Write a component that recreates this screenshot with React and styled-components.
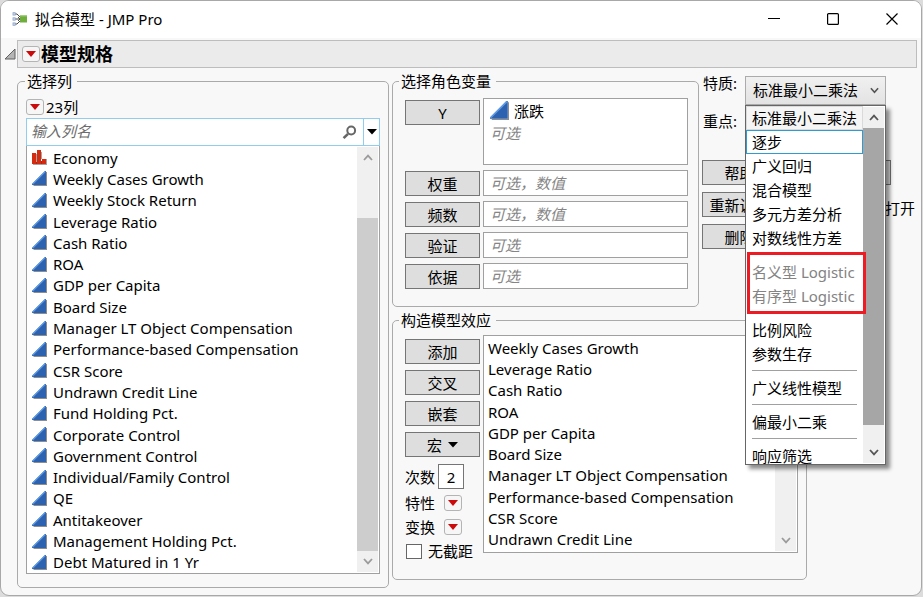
import React from "react";
import styled, { createGlobalStyle, css } from "styled-components";

const GlobalStyle = createGlobalStyle`
  *, *::before, *::after { box-sizing: border-box; }
  body { margin: 0; background: #dcdcdc; }
  body, button, input, select {
    font-family: "Noto Sans", "Noto Sans CJK SC", sans-serif;
    font-size: 15px;
    line-height: 20px;
    color: #000;
  }
`;

const Window = styled.main`
  display: flex;
  flex-direction: column;
  min-height: calc(100vh - 1px);
  margin: 0 1px 1px 0;
  background: #f8f8f8;
  border: 1px solid #a8a8a8;
  border-radius: 9px;
  overflow: hidden;
`;

const TitleBar = styled.header`
  display: flex;
  align-items: center;
  height: 37px;
  padding: 0 0 1px 11px;
  background: #fff;
`;

const Title = styled.h1`
  flex: 1;
  margin: 0 0 0 7px;
  font-size: 15px;
  font-weight: 400;
`;

const WindowButton = styled.button`
  display: grid;
  place-items: center;
  width: 59px;
  height: 36px;
  padding: 0;
  border: 0;
  background: none;
`;

const SectionRow = styled.div`
  display: flex;
  align-items: center;
  gap: 1px;
  padding: 2px 4px 3px 3px;
`;

const IconButton = styled.button`
  display: grid;
  place-items: center;
  padding: 0;
  border: 0;
  background: none;
  color: inherit;
`;

const SectionHeader = styled.div`
  display: flex;
  flex: 1;
  align-items: center;
  gap: 1px;
  height: 28px;
  padding-left: 4px;
  background: #ebebeb;
  border: 1px solid #bdbdbd;
`;

const SectionTitle = styled.h2`
  margin: 0;
  font-size: 18px;
  line-height: 24px;
  font-weight: 700;
`;

const RedButton = styled.button`
  display: grid;
  place-items: center;
  flex: none;
  width: 18px;
  height: 16px;
  padding: 0;
  background: #f6f6f6;
  border: 1px solid #b4b4b4;
  border-radius: 3px;
`;

const Columns = styled.div`
  display: grid;
  flex: 1;
  grid-template-columns: minmax(0, 372fr) minmax(0, 525fr);
  gap: 3px;
  padding: 0 4px 7px 16px;
`;

const Group = styled.fieldset`
  min-width: 0;
  margin: 0;
  padding: ${(p) => p.$padding};
  border: 1px solid #aaa;
  border-radius: 5px;
`;

const ColumnGroup = styled(Group)`
  display: flex;
  flex-direction: column;
`;

const Legend = styled.legend`
  margin: 0 0 0 ${(p) => p.$shift || 0}px;
  padding: 0 5px 0 2px;
`;

const CountRow = styled.div`
  display: flex;
  align-items: center;
  gap: 2px;
  height: 22px;
  padding-bottom: 1px;
`;

const SearchBox = styled.div`
  display: flex;
  height: 28px;
  background: #fff;
  border: 1px solid #93cdec;
`;

const SearchInput = styled.input`
  flex: 1;
  min-width: 0;
  padding: 0 4px 2px;
  border: 0;
  outline: 0;
  background: none;
  &::placeholder { color: #6c6c6c; font-style: italic; opacity: 1; }
`;

const SearchIcon = styled.span`
  display: grid;
  place-items: center;
  width: 28px;
`;

const SearchMenuButton = styled(IconButton)`
  width: 16px;
  border-left: 1px solid #93cdec;
`;

const ListFrame = styled.div`
  display: flex;
  background: #fff;
  border: 1px solid #a0a0a0;
  ${(p) => p.$fill && css`flex: 1; border-top: 0;`}
  ${(p) => p.$minHeight && css`min-height: ${p.$minHeight}px;`}
`;

const Rows = styled.ul`
  display: grid;
  flex: 1;
  grid-auto-rows: minmax(20px, 1fr);
  min-width: 0;
  margin: 0;
  padding: ${(p) => p.$padding};
  list-style: none;
`;

const Row = styled.li`
  display: flex;
  align-items: center;
  gap: 6px;
  white-space: nowrap;
`;

const Scrollbar = styled.div`
  display: grid;
  flex: none;
  grid-template-rows: 21px ${(p) => p.$track} 21px;
  width: 21px;
  margin: 1px 1px 1px 0;
  background: #f0f0f0;
  color: ${(p) => p.$arrow || "#9b9b9b"};
`;

const Thumb = styled.div`
  grid-row: 3;
  background: ${(p) => p.$color || "#cdcdcd"};
`;

const ScrollEnd = styled(IconButton)`
  grid-row: 5;
`;

const RightSide = styled.div`
  display: flex;
  flex-direction: column;
  gap: 3px;
  min-width: 0;
`;

const TopArea = styled.div`
  display: grid;
  grid-template-columns: minmax(0, 307fr) minmax(0, 214fr);
  gap: 4px;
`;

const RoleGrid = styled.div`
  display: grid;
  grid-template-columns: 75px minmax(0, 1fr);
  gap: 5px 3px;
  align-items: end;
`;

const PushButton = styled.button`
  display: flex;
  align-items: center;
  justify-content: center;
  gap: 6px;
  width: 75px;
  height: 25px;
  padding: 0;
  background: #dedede;
  border: 1px solid #757575;
  white-space: nowrap;
  ${(p) => p.$top && css`align-self: start; margin-top: 2px;`}
`;

const RoleBox = styled.div`
  height: 67px;
  padding: 1px 6px;
  background: #fff;
  border: 1px solid #a0a0a0;
`;

const RoleItem = styled.div`
  display: flex;
  align-items: center;
  gap: 5px;
  height: 21px;
`;

const Hint = styled.div`
  line-height: 24px;
  font-style: italic;
  color: #858585;
`;

const RoleInput = styled.input`
  width: 100%;
  height: 26px;
  padding: 0 6px;
  background: #fff;
  border: 1px solid #a0a0a0;
  outline: 0;
  &::placeholder {
    font-style: italic;
    color: #858585;
    opacity: 1;
  }
`;

const EffectsGroup = styled(Group)`
  width: 100%;
  max-width: 415px;
`;

const EffectsLayout = styled.div`
  display: grid;
  grid-template-columns: 75px minmax(0, 1fr);
  gap: 3px;
  align-items: start;
`;

const Controls = styled.div`
  display: flex;
  flex-direction: column;
  gap: 6px;
  padding-top: 4px;
`;

const OptionStack = styled.div`
  display: flex;
  flex-direction: column;
  gap: 4px;
  padding-top: 1px;
`;

const OptionRow = styled.div`
  display: flex;
  align-items: center;
  gap: ${(p) => p.$gap}px;
  white-space: nowrap;
`;

const DegreeInput = styled.input`
  width: 26px;
  height: 25px;
  padding: 0;
  text-align: center;
  background: #fff;
  border: 1px solid #757575;
`;

const Tick = styled.input`
  appearance: none;
  flex: none;
  width: 16px;
  height: 15px;
  margin: 0 0 0 1px;
  background: #fff;
  border: 1px solid #666;
`;

const Panel = styled.section`
  padding-top: 5px;
  min-width: 0;
`;

const FieldRow = styled.div`
  display: flex;
  align-items: flex-start;
  gap: 8px;
  height: 38px;
`;

const FieldLabel = styled.label`
  width: 34px;
  line-height: 14px;
  white-space: nowrap;
`;

const SelectWrap = styled.div`
  position: relative;
  width: 141px;
`;

const Select = styled.select`
  appearance: none;
  display: block;
  width: 100%;
  height: 29px;
  padding: 0 7px 1px;
  background: linear-gradient(#f0f0f0, #e3e3e3);
  border: 1px solid #ababab;
  border-radius: 0;
  outline: 0;
`;

const SelectArrow = styled.span`
  position: absolute;
  top: 11px;
  right: 7px;
  display: grid;
  color: #555;
  pointer-events: none;
`;

const Popup = styled.div`
  position: absolute;
  z-index: 2;
  top: 100%;
  left: 0;
  display: flex;
  width: 100%;
  height: 360px;
  background: #fff;
  border: 1px solid #666;
  box-shadow: 4px 4px 4px rgba(0, 0, 0, 0.45);
`;

const PopupList = styled.ul`
  flex: 1;
  min-width: 0;
  margin: 0;
  padding: 0;
  overflow: hidden;
  list-style: none;
`;

const PopupItem = styled.li`
  height: 24px;
  padding: 1px 5px;
  border: 1px solid transparent;
  white-space: nowrap;
  ${(p) => p.$state === "current" && css`background: #f5f5f5; border-color: #dadada;`}
  ${(p) => p.$state === "hover" && css`background: #fff; border-color: #2f9bd3;`}
  ${(p) => p.$state === "disabled" && css`color: #838383;`}
`;

const Divider = styled.li`
  height: 10px;
  padding: 4px 6px 0;
  &::before { content: ""; display: block; height: 1px; background: #a0a0a0; }
`;

const RedFrame = styled.div`
  position: absolute;
  top: 146px;
  left: 1px;
  width: 119px;
  height: 62px;
  border: 3px solid #ed1c24;
  pointer-events: none;
`;

const Actions = styled.div`
  display: grid;
  gap: 7px;
  margin-top: 8px;
`;

const ActionRow = styled.div`
  display: flex;
  align-items: center;
  gap: ${(p) => p.$gap || 0}px;
  height: 25px;
  margin-left: -1px;
`;

const KeepOpen = styled.label`
  display: flex;
  align-items: center;
  gap: 4px;
  padding-top: 6px;
  white-space: nowrap;
`;

const AppIcon = () => (
  <svg width="16" height="14" viewBox="0 0 16 14" aria-hidden="true">
    <path d="M3 2 H5 L8 5 M3 7 H8 M3 12 H5 L8 9" stroke="#4c4c4c" fill="none" />
    <path d="M6 5 L8 7 L6 9" stroke="#4c4c4c" fill="none" />
    <g fill="#cfdcf2" stroke="#8ea2c4" strokeWidth=".8">
      <rect x="1" y=".7" width="2.2" height="2.4" />
      <rect x="1" y="5.8" width="2.2" height="2.4" />
      <rect x="1" y="10.9" width="2.2" height="2.4" />
    </g>
    <rect x="8" y="3.5" width="7" height="7" fill="#6fae3c" />
    <path d="M8 4 H15" stroke="#93c868" />
  </svg>
);

const Disclosure = () => (
  <svg width="12" height="12" viewBox="0 0 12 12" aria-hidden="true">
    <path d="M11 1 V11 H1 Z" fill="#b5b5b5" stroke="#606060" strokeLinejoin="round" />
  </svg>
);

const RedTriangle = ({ label }) => (
  <RedButton type="button" aria-label={label}>
    <svg width="10" height="6" viewBox="0 0 10 6" aria-hidden="true">
      <path d="M0 0 H10 L5 6 Z" fill="#cc0a0a" />
    </svg>
  </RedButton>
);

const BlackTriangle = () => (
  <svg width="10" height="6" viewBox="0 0 10 6" aria-hidden="true">
    <path d="M0 0 H10 L5 5.4 Z" fill="#000" />
  </svg>
);

const Magnifier = () => (
  <svg width="15" height="15" viewBox="0 0 15 15" aria-hidden="true">
    <circle cx="9.2" cy="5.5" r="3.9" fill="none" stroke="#666" strokeWidth="2" />
    <path d="M6 8.8 L1.6 13.2" stroke="#666" strokeWidth="2.6" />
  </svg>
);

const Continuous = ({ size = 15 }) => (
  <svg width={size} height={size} viewBox="0 0 15 15" aria-hidden="true">
    <path d="M15 1 V15 H1 L2 14 H14 V1 Z" fill="#8e8e8e" />
    <path d="M14 0 V14 H0 V13 L13 0 Z" fill="#2c62b0" />
    <path d="M0.5 13.2 L13.3 0.5" stroke="#5e9be4" strokeWidth="1.2" />
  </svg>
);

const Nominal = () => (
  <svg width="15" height="15" viewBox="0 0 15 15" aria-hidden="true">
    <path d="M4 4 H5 V13 H4 Z M9 2 H10 V9 H9 Z M14 9 H15 V15 H1 V14 H14 Z" fill="#a4a4a4" />
    <path d="M0 3 H4 V14 H0 Z M5 0 H9 V14 H5 Z M10 9 H14 V14 H10 Z" fill="#d42a10" />
    <path d="M4 12 H5 V14 H4 Z M9 11 H10 V14 H9 Z" fill="#b52310" />
  </svg>
);

const Chevron = ({ up, size = 10 }) => (
  <svg
    width={size}
    height="7"
    viewBox="0 0 10 7"
    fill="none"
    stroke="currentColor"
    strokeWidth="1.8"
    aria-hidden="true"
  >
    <path d={up ? "M1 6 L5 1.6 L9 6" : "M1 1 L5 5.4 L9 1"} />
  </svg>
);

const ScrollColumn = ({ track, arrow, thumb }) => (
  <Scrollbar $track={track} $arrow={arrow}>
    <IconButton type="button" aria-label="向上滚动"><Chevron up /></IconButton>
    <Thumb $color={thumb} />
    <ScrollEnd type="button" aria-label="向下滚动"><Chevron /></ScrollEnd>
  </Scrollbar>
);

const columns = [
  "Economy", "Weekly Cases Growth", "Weekly Stock Return", "Leverage Ratio", "Cash Ratio",
  "ROA", "GDP per Capita", "Board Size", "Manager LT Object Compensation",
  "Performance-based Compensation", "CSR Score", "Undrawn Credit Line", "Fund Holding Pct.",
  "Corporate Control", "Government Control", "Individual/Family Control", "QE",
  "Antitakeover", "Management Holding Pct.", "Debt Matured in 1 Yr",
];

const effects = [
  "Weekly Cases Growth", "Leverage Ratio", "Cash Ratio", "ROA", "GDP per Capita",
  "Board Size", "Manager LT Object Compensation", "Performance-based Compensation",
  "CSR Score", "Undrawn Credit Line",
];

const roles = [
  ["权重", "可选，数值"],
  ["频数", "可选，数值"],
  ["验证", "可选"],
  ["依据", "可选"],
];

const personalities = [
  ["标准最小二乘法", "current"], ["逐步", "hover"], ["广义回归"], ["混合模型"],
  ["多元方差分析"], ["对数线性方差"], null,
  ["名义型 Logistic", "disabled"], ["有序型 Logistic", "disabled"], null,
  ["比例风险"], ["参数生存"], null, ["广义线性模型"], null, ["偏最小二乘"], null,
  ["响应筛选"],
];

const ColumnPicker = () => (
  <ColumnGroup $padding="5px 8px 13px">
    <Legend $shift={-1}>选择列</Legend>
    <CountRow>
      <RedTriangle label="列选项" />
      <span>23列</span>
    </CountRow>
    <SearchBox>
      <SearchInput aria-label="输入列名" placeholder="输入列名" />
      <SearchIcon><Magnifier /></SearchIcon>
      <SearchMenuButton type="button" aria-label="搜索选项"><BlackTriangle /></SearchMenuButton>
    </SearchBox>
    <ListFrame $fill>
      <Rows $padding="1px 0 0 5px">
        {columns.map((name) => (
          <Row key={name}>
            {name === "Economy" ? <Nominal /> : <Continuous />}
            {name}
          </Row>
        ))}
      </Rows>
      <ScrollColumn track="50fr 333fr 0fr" />
    </ListFrame>
  </ColumnGroup>
);

const RolePicker = () => (
  <Group $padding="7px 10px 17px 12px">
    <Legend $shift={-6}>选择角色变量</Legend>
    <RoleGrid>
      <PushButton type="button" $top>Y</PushButton>
      <RoleBox>
        <RoleItem><Continuous size={19} />涨跌</RoleItem>
        <Hint>可选</Hint>
      </RoleBox>
      {roles.map(([name, hint]) => (
        <React.Fragment key={name}>
          <PushButton type="button">{name}</PushButton>
          <RoleInput aria-label={name} placeholder={hint} />
        </React.Fragment>
      ))}
    </RoleGrid>
  </Group>
);

const PersonalityMenu = () => (
  <Popup>
    <PopupList role="listbox" aria-label="特质">
      {personalities.map((item, i) =>
        item ? (
          <PopupItem
            key={item[0]}
            role="option"
            aria-selected={item[1] === "current"}
            aria-disabled={item[1] === "disabled"}
            $state={item[1]}
          >
            {item[0]}
          </PopupItem>
        ) : (
          <Divider key={i} role="presentation" />
        )
      )}
    </PopupList>
    <ScrollColumn track="0fr 298fr 17fr" arrow="#555" thumb="#a6a6a6" />
    <RedFrame />
  </Popup>
);

const SettingsPanel = () => (
  <Panel>
    <FieldRow>
      <FieldLabel htmlFor="personality">特质:</FieldLabel>
      <SelectWrap>
        <Select id="personality" defaultValue="标准最小二乘法">
          <option>标准最小二乘法</option>
        </Select>
        <SelectArrow><Chevron size={9} /></SelectArrow>
        <PersonalityMenu />
      </SelectWrap>
    </FieldRow>
    <FieldRow>
      <FieldLabel as="span">重点:</FieldLabel>
    </FieldRow>
    <Actions>
      <ActionRow $gap={39}>
        <PushButton type="button">帮助</PushButton>
        <PushButton type="button" aria-label="运行" />
      </ActionRow>
      <ActionRow $gap={12}>
        <PushButton type="button">重新调用</PushButton>
        <KeepOpen><Tick type="checkbox" />保持对话框打开</KeepOpen>
      </ActionRow>
      <ActionRow>
        <PushButton type="button">删除</PushButton>
      </ActionRow>
    </Actions>
  </Panel>
);

const EffectsBuilder = () => (
  <EffectsGroup $padding="5px 8px 18px 12px">
    <Legend $shift={-6}>构造模型效应</Legend>
    <EffectsLayout>
      <Controls>
        <PushButton type="button">添加</PushButton>
        <PushButton type="button">交叉</PushButton>
        <PushButton type="button">嵌套</PushButton>
        <PushButton type="button">宏<BlackTriangle /></PushButton>
        <OptionStack>
          <OptionRow $gap={3}>
            <label htmlFor="degree">次数</label>
            <DegreeInput id="degree" defaultValue="2" />
          </OptionRow>
          <OptionRow $gap={9}>特性<RedTriangle label="特性" /></OptionRow>
          <OptionRow $gap={9}>变换<RedTriangle label="变换" /></OptionRow>
          <OptionRow as="label" $gap={6}><Tick type="checkbox" />无截距</OptionRow>
        </OptionStack>
      </Controls>
      <ListFrame $minHeight={218}>
        <Rows $padding="1px 0 2px 4px">
          {effects.map((name) => <Row key={name}>{name}</Row>)}
        </Rows>
        <ScrollColumn track="0fr 100fr 74fr" />
      </ListFrame>
    </EffectsLayout>
  </EffectsGroup>
);

export default function App() {
  return (
    <>
      <GlobalStyle />
      <Window>
        <TitleBar>
          <AppIcon />
          <Title>拟合模型 - JMP Pro</Title>
          <WindowButton type="button" aria-label="最小化">
            <svg width="12" height="12"><path d="M0 5.5 H12" stroke="#000" /></svg>
          </WindowButton>
          <WindowButton type="button" aria-label="最大化">
            <svg width="12" height="12"><rect x=".6" y=".6" width="10.8" height="10.8" rx="1" fill="none" stroke="#000" strokeWidth="1.2" /></svg>
          </WindowButton>
          <WindowButton type="button" aria-label="关闭">
            <svg width="12" height="12"><path d="M.5 .5 L11.5 11.5 M11.5 .5 L.5 11.5" stroke="#000" strokeWidth="1.2" /></svg>
          </WindowButton>
        </TitleBar>
        <SectionRow>
          <IconButton type="button" aria-label="折叠"><Disclosure /></IconButton>
          <SectionHeader>
            <RedTriangle label="模型规格选项" />
            <SectionTitle>模型规格</SectionTitle>
          </SectionHeader>
        </SectionRow>
        <Columns>
          <ColumnPicker />
          <RightSide>
            <TopArea>
              <RolePicker />
              <SettingsPanel />
            </TopArea>
            <EffectsBuilder />
          </RightSide>
        </Columns>
      </Window>
    </>
  );
}
